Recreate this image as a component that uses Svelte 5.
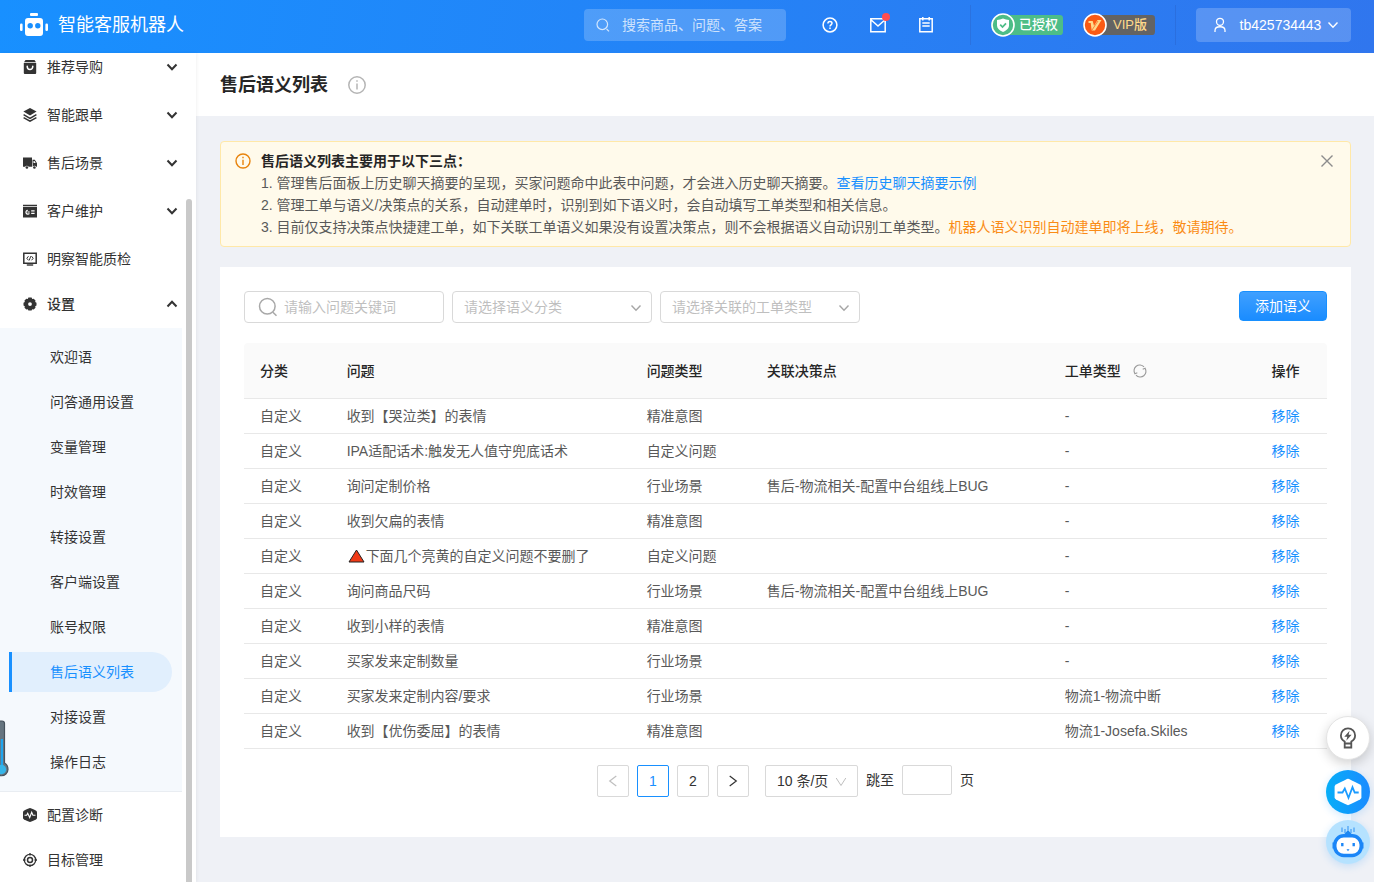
<script>
  const topMenu = [
    { label: '推荐导购', icon: 'bag', arrow: true },
    { label: '智能跟单', icon: 'layers', arrow: true },
    { label: '售后场景', icon: 'truck', arrow: true },
    { label: '客户维护', icon: 'card', arrow: true },
    { label: '明察智能质检', icon: 'monitor', arrow: false }
  ];
  const subMenu = ['欢迎语', '问答通用设置', '变量管理', '时效管理', '转接设置', '客户端设置', '账号权限', '售后语义列表', '对接设置', '操作日志'];
  const bottomMenu = [
    { label: '配置诊断', icon: 'pulse' },
    { label: '目标管理', icon: 'target' }
  ];
  const bug = '售后-物流相关-配置中台组线上BUG';
  const rows = [
    { q: '收到【哭泣类】的表情', t: '精准意图', d: '', w: '-' },
    { q: 'IPA适配话术:触发无人值守兜底话术', t: '自定义问题', d: '', w: '-' },
    { q: '询问定制价格', t: '行业场景', d: bug, w: '-' },
    { q: '收到欠扁的表情', t: '精准意图', d: '', w: '-' },
    { q: '下面几个亮黄的自定义问题不要删了', t: '自定义问题', d: '', w: '-', warn: true },
    { q: '询问商品尺码', t: '行业场景', d: bug, w: '-' },
    { q: '收到小样的表情', t: '精准意图', d: '', w: '-' },
    { q: '买家发来定制数量', t: '行业场景', d: '', w: '-' },
    { q: '买家发来定制内容/要求', t: '行业场景', d: '', w: '物流1-物流中断' },
    { q: '收到【优伤委屈】的表情', t: '精准意图', d: '', w: '物流1-Josefa.Skiles' }
  ];
  let keyword = $state('');
  let search = $state('');
  let jump = $state('');
</script>

{#snippet chevron(size)}
  <svg class="chev" width={size} height={size} viewBox="0 0 12 12" fill="none" stroke="currentColor" aria-hidden="true"><path d="M1.5 3.5 6 8.3l4.5-4.8" /></svg>
{/snippet}

{#snippet menuIcon(name)}
  <svg width="14" height="14" viewBox="0 0 14 14" fill="#333" aria-hidden="true">
    {#if name === 'bag'}
      <path d="M2.5 0h9l1.500 2.200H1zM.8 3h12.400v10a1 1 0 0 1-1 1H1.800a1 1 0 0 1-1-1z" />
      <path d="M4.200 6.200c0 4.400 5.600 4.400 5.600 0" fill="none" stroke="#fff" stroke-width="1.500" stroke-linecap="round" />
    {:else if name === 'layers'}
      <path d="M7 0l6.600 3.600L7 7.400.4 3.600z" />
      <path d="M.6 6.700 7 10.300l6.400-3.600M.6 9.700 7 13.200l6.400-3.500" fill="none" stroke="#333" stroke-width="1.500" />
    {:else if name === 'truck'}
      <path d="M0 1.500h9v9.300H5.700a2 2 0 0 0-3.600 0H0zM9.500 3.800h2.300l2.200 3.400v3.600h-.7a2 2 0 0 0-3.600 0z" />
      <path d="M10.500 4.900h1l1.200 2.200h-2.200z" fill="#fff" />
      <circle cx="3.900" cy="11.500" r="1.300" /><circle cx="11.400" cy="11.500" r="1.300" />
    {:else if name === 'card'}
      <path d="M0 .8h14v1.400H0zM0 3h14v10.400H0z" />
      <path d="M4.800 6.300A1.900 1.900 0 1 0 6.400 9.300M4.500 8h2.200M8.200 6.800h3.400M8.200 9.400h3.400" fill="none" stroke="#fff" stroke-width="1.200" />
    {:else if name === 'monitor'}
      <path d="M.8 1.300h12.400v9.900H.8z" fill="none" stroke="#333" stroke-width="1.500" />
      <path d="M3.800 12.300h6.400v1.400H3.800z" />
      <path d="M5.500 4.200 3.800 6.300 5.500 8.300M8.500 4.200l1.700 2.100-1.700 2M7.800 4.200 6.200 8.400" fill="none" stroke="#333" />
    {:else if name === 'gear'}
      <path fill-rule="evenodd" d="M5.400.5h3.200l.6 1.400 1.500-.2 1.800 1.800-.3 1.500 1.300.7v2.800l-1.300.7.3 1.600-1.800 1.700-1.500-.2-.6 1.200H5.400l-.6-1.200-1.500.2-1.800-1.700.3-1.600-1.300-.7V5.700l1.300-.7-.3-1.500 1.800-1.800 1.500.2zM7 5.200a1.900 1.900 0 1 0 0 3.800 1.900 1.900 0 0 0 0-3.800z" />
    {:else if name === 'pulse'}
      <path d="M7 0q1 0 6.200 2.700.8.500.8 1.500v5.600q0 1-.8 1.500Q8 14 7 14T.8 11.300Q0 10.800 0 9.800V4.200q0-1 .8-1.500Q6 0 7 0z" />
      <path d="M1.500 7.200h2.200l1-2 2 4.300 2-5.200 1.200 2.900h2.600" fill="none" stroke="#fff" stroke-width="1.100" />
    {:else}
      <circle cx="7" cy="7" r="5.700" fill="none" stroke="#333" stroke-width="1.300" />
      <circle cx="7" cy="7" r="2.500" fill="none" stroke="#333" stroke-width="1.500" />
      <path d="M7 0v2.500M7 11.500V14M0 7h2.500M11.500 7H14" stroke="#333" stroke-width="1.300" />
    {/if}
  </svg>
{/snippet}

<div class="app">
  <header>
    <a class="brand" href="#home">
      <svg width="28" height="24" viewBox="0 0 28 24" fill="#fff" aria-hidden="true">
        <rect x="10" y="0" width="8" height="3" rx="1" />
        <path fill-rule="evenodd" d="M8 5h12a3 3 0 0 1 3 3v12a3 3 0 0 1-3 3H8a3 3 0 0 1-3-3V8a3 3 0 0 1 3-3zM10.200 10a2.700 2.700 0 1 0 0 5.400 2.700 2.700 0 0 0 0-5.400zM17.800 10a2.700 2.700 0 1 0 0 5.400 2.700 2.700 0 0 0 0-5.400z" />
        <rect x="0" y="10.500" width="2.600" height="7.500" rx="1.200" /><rect x="25.400" y="10.500" width="2.600" height="7.500" rx="1.200" />
      </svg>
      <span>智能客服机器人</span>
    </a>
    <label class="head-search">
      <svg width="14" height="14" viewBox="0 0 14 14" fill="none" stroke="#fff" stroke-opacity=".75" stroke-width="1.200" aria-hidden="true"><circle cx="6.300" cy="6.300" r="5.300" /><path d="m10.600 11 2.400 2.400" /></svg>
      <input type="text" aria-label="搜索" placeholder="搜索商品、问题、答案" bind:value={search} />
    </label>
    <div class="tools">
      <button aria-label="帮助">
        <svg width="16" height="16" viewBox="0 0 16 16" fill="none" stroke="#fff" stroke-width="1.500"><circle cx="8" cy="8" r="6.900" /><path d="M5.900 6.600C5.900 3.700 10 3.900 10 6.300 10 7.800 8 7.900 8 9.500M8 10.600v1.500" /></svg>
      </button>
      <button aria-label="消息" class="mail">
        <svg width="16" height="16" viewBox="0 0 16 16" fill="none" stroke="#fff" stroke-width="1.500"><path d="M.8 1.800h14.400v12.900H.8zM1.200 3 8 9l6.800-6" /></svg>
        <i></i>
      </button>
      <button aria-label="日志">
        <svg width="16" height="16" viewBox="0 0 16 16" fill="none" stroke="#fff" stroke-width="1.500"><path d="M1.800 1.800h12.400v12.900H1.800zM4.800 0v3.600M11.200 0v3.600M4.300 6h7.400M4.300 9h7.400" /></svg>
      </button>
    </div>
    <div class="badges">
      <span class="badge green">
        <svg width="24" height="24" viewBox="0 0 24 24" aria-hidden="true"><circle cx="12" cy="12" r="11" fill="#4dbd87" stroke="#fff" stroke-width="1.600" /><path d="M12 5.500q3 1.200 6 1.500v5.500c0 3-2.500 5-6 6.500-3.500-1.500-6-3.500-6-6.500V7q3-.3 6-1.500z" fill="#fff" /><path d="m9.200 11.700 2.300 2.300 3.500-3.700" fill="none" stroke="#4dbd87" stroke-width="1.700" /></svg>
        <span>已授权</span>
      </span>
      <span class="badge vip">
        <svg width="24" height="24" viewBox="0 0 24 24" aria-hidden="true"><circle cx="12" cy="12" r="11" fill="#fa5a14" stroke="#fff" stroke-width="1.600" /><path d="M5.500 8h4.200l1.300 4.800L14.500 7h4L12 17.500H8.700L7.700 10H5.500z" fill="#ffd98a" /><path d="m15 8-6 9" stroke="#fa5a14" stroke-width=".7" /></svg>
        <span>VIP版</span>
      </span>
    </div>
    <button class="user">
      <svg width="16" height="16" viewBox="0 0 16 16" fill="none" stroke="#fff" stroke-width="1.300" aria-hidden="true"><circle cx="8" cy="4.800" r="3.500" /><path d="M3 15v-1.500C3 8.500 13 8.500 13 13.500V15" /></svg>
      <span>tb425734443</span>
      {@render chevron(12)}
    </button>
  </header>

  <div class="body">
    <aside>
      <nav>
        {#each topMenu as item}
          <a class="item" href="#menu">{@render menuIcon(item.icon)}<span>{item.label}</span>{#if item.arrow}{@render chevron(12)}{/if}</a>
        {/each}
        <a class="item open" href="#menu">{@render menuIcon('gear')}<span>设置</span>{@render chevron(12)}</a>
        <div class="sub">
          {#each subMenu as label}
            <a href="#menu" class:active={label === '售后语义列表'}>{label}</a>
          {/each}
        </div>
        {#each bottomMenu as item}
          <a class="item short" href="#menu">{@render menuIcon(item.icon)}<span>{item.label}</span></a>
        {/each}
      </nav>
      <div class="scroll-thumb"></div>
      <svg class="thermo" width="9" height="57" viewBox="0 0 9 57" aria-hidden="true">
        <path d="M-4 1h6q2.500 0 2.500 2.500V43q3.500 2 3.500 6.500A6.500 6.500 0 0 1-5 49z" fill="#667580" stroke="#46525c" stroke-width="1.200" />
        <path d="M.8 19H3v26H.8z" fill="#1fa5ee" /><circle cx="1.500" cy="49.500" r="4.700" fill="#36b5e8" />
      </svg>
    </aside>

    <main>
      <div class="title">
        <h1>售后语义列表</h1>
        <svg width="18" height="18" viewBox="0 0 18 18" fill="none" stroke="#b5b5b5" stroke-width="1.500" aria-hidden="true"><circle cx="9" cy="9" r="8.200" /><path d="M9 4.300v1.500M9 7.500v6" /></svg>
      </div>

      <div class="content">
        <section class="alert">
          <svg class="warn" width="16" height="16" viewBox="0 0 16 16" fill="none" stroke="#e8830c" stroke-width="1.400" aria-hidden="true"><circle cx="8" cy="8" r="7" /><path d="M8 3.800v1.500M8 6.700v5.300" /></svg>
          <div class="alert-text">
            <strong>售后语义列表主要用于以下三点：</strong>
            <p>1. 管理售后面板上历史聊天摘要的呈现，买家问题命中此表中问题，才会进入历史聊天摘要。<a href="#sample">查看历史聊天摘要示例</a></p>
            <p>2. 管理工单与语义/决策点的关系，自动建单时，识别到如下语义时，会自动填写工单类型和相关信息。</p>
            <p>3. 目前仅支持决策点快捷建工单，如下关联工单语义如果没有设置决策点，则不会根据语义自动识别工单类型。<em>机器人语义识别自动建单即将上线，敬请期待。</em></p>
          </div>
          <button class="close" aria-label="关闭">
            <svg width="14" height="14" viewBox="0 0 14 14" fill="none" stroke="#8c8c8c" stroke-width="1.400"><path d="m1.500 1.500 11 11M12.500 1.500l-11 11" /></svg>
          </button>
        </section>

        <section class="card">
          <div class="filters">
            <label class="field">
              <svg width="20" height="20" viewBox="0 0 20 20" fill="none" stroke="#a8a8a8" stroke-width="1.500" aria-hidden="true"><circle cx="9.300" cy="9.300" r="7.800" /><path d="m14.900 15.200 3.600 3.600" /></svg>
              <input type="text" aria-label="问题关键词" placeholder="请输入问题关键词" bind:value={keyword} />
            </label>
            <div class="select">
              <select aria-label="语义分类"><option>请选择语义分类</option></select>
              {@render chevron(12)}
            </div>
            <div class="select">
              <select aria-label="工单类型"><option>请选择关联的工单类型</option></select>
              {@render chevron(12)}
            </div>
            <button class="primary">添加语义</button>
          </div>

          <table>
            <colgroup><col class="c1" /><col class="c2" /><col class="c3" /><col class="c4" /><col class="c5" /><col class="c6" /></colgroup>
            <thead>
              <tr>
                <th>分类</th><th>问题</th><th>问题类型</th><th>关联决策点</th>
                <th><span class="refresh">工单类型<svg width="14" height="14" viewBox="0 0 14 14" fill="none" stroke="#999" stroke-width="1.100" aria-hidden="true"><path d="M2.100 10A5.700 5.700 0 0 1 11 2.900M11.900 4A5.700 5.700 0 0 1 3 11.100M9.700 5.300l2.400-1 .9 2.400M4.300 8.700l-2.400 1-.9-2.400" /></svg></span></th>
                <th>操作</th>
              </tr>
            </thead>
            <tbody>
              {#each rows as r}
                <tr>
                  <td>自定义</td>
                  <td>{#if r.warn}<svg class="tri" width="19" height="14" viewBox="0 0 19 14" aria-hidden="true"><path d="M9.500 1 17 13H2z" fill="#f03a17" stroke="#222" /></svg>{/if}{r.q}</td>
                  <td>{r.t}</td>
                  <td>{r.d}</td>
                  <td>{r.w}</td>
                  <td><a href="#remove">移除</a></td>
                </tr>
              {/each}
            </tbody>
          </table>

          <div class="pager">
            <button class="page" aria-label="上一页" disabled><svg width="12" height="12" viewBox="0 0 12 12" fill="none" stroke="currentColor" stroke-width="1.200"><path d="M9.300 1 2.700 6l6.600 5" /></svg></button>
            <button class="page current">1</button>
            <button class="page">2</button>
            <button class="page" aria-label="下一页"><svg width="12" height="12" viewBox="0 0 12 12" fill="none" stroke="currentColor" stroke-width="1.200"><path d="M2.700 1 9.300 6l-6.600 5" /></svg></button>
            <div class="select size">
              <select aria-label="每页条数"><option>10 条/页</option></select>
              <svg class="chev" width="12" height="12" viewBox="0 0 12 12" fill="none" stroke="currentColor" aria-hidden="true"><path d="m1.200 2 4.800 7.500L10.800 2" /></svg>
            </div>
            <label class="jump"><span>跳至</span><input type="text" aria-label="页码" bind:value={jump} /><span>页</span></label>
          </div>
        </section>
      </div>
    </main>
  </div>

  <div class="floats">
    <button class="bulb" aria-label="建议">
      <svg width="20" height="24" viewBox="0 0 20 24" fill="none" stroke="#555" stroke-width="1.800"><path d="M6.700 17.500v-2C4 14 2.900 11.800 2.900 9.500a7.100 7.100 0 0 1 14.200 0c0 2.300-1.100 4.500-3.800 6v2zM6.700 17.500v4h6.600v-4" /><path d="M11.600 4.800 6.300 10.700h3l-1 4 5.300-6h-3z" fill="#555" stroke="none" /></svg>
    </button>
    <button class="diag" aria-label="诊断">
      <svg width="28" height="28" viewBox="0 0 28 28"><path d="M14 .8q.8 0 12 5.700 1.400.8 1.400 2.200v10.600q0 1.400-1.400 2.200-11.200 5.700-12 5.700t-12-5.700Q.6 20.700.6 19.300V8.700q0-1.400 1.400-2.200Q13.200.8 14 .8z" fill="#fff" /><path d="M3.500 14.500h5l2.300-4 3.700 9.300 4-10.600 2.200 5.300h4" fill="none" stroke="#1a9bff" stroke-width="1.800" /></svg>
    </button>
    <button class="bot" aria-label="机器人助手">
      <svg width="32" height="32" viewBox="0 0 32 32" fill="none"><path d="M10 1.500v4.500M13 3v4M16 0v8M19 3v4M22 1.500v4.500" stroke="#3a98f5" stroke-width="1.100" /><path d="M11 9.500 15.200 5h1.600L21 9.500z" fill="#1e88f0" /><rect x="2.800" y="9.800" width="26.400" height="19.700" rx="9" fill="#fff" stroke="#1b86f7" stroke-width="3.400" /><path d="M.5 16.500h2v6h-2zM29.500 16.500h2v6h-2z" fill="#1b86f7" /><path d="M10.300 17v3.300M21.700 17v3.300" stroke="#1b86f7" stroke-width="2.400" /><path d="M14.500 23.200h3l-1.500 2z" fill="#1b86f7" /></svg>
    </button>
  </div>
</div>

<style>
  :global(body) { margin: 0; background: #eff1f6; }
  .app, .app * { box-sizing: border-box; }
  .app {
    min-height: 100vh;
    font: 14px/22px "Liberation Sans", "Noto Sans CJK SC", sans-serif;
    color: #595959;
  }
  button, input, select { font: inherit; color: inherit; }
  button { border: 0; padding: 0; background: none; cursor: pointer; display: flex; align-items: center; justify-content: center; }
  input { border: 0; outline: 0; padding: 0; background: none; min-width: 0; }
  a { color: #1890ff; text-decoration: none; }
  svg { flex: none; display: block; }
  .chev { stroke-width: 1.4; }

  header {
    height: 53px;
    padding: 0 23px 3px 20px;
    display: flex;
    align-items: center;
    background: linear-gradient(100deg, #1890ff, #3076ee);
    color: #fff;
  }
  .brand { display: flex; align-items: center; gap: 10px; color: #fff; font-size: 18px; margin-right: auto; }
  .head-search { width: 202px; height: 32px; padding: 0 12px; display: flex; align-items: center; gap: 12px; border-radius: 4px; background: #ffffff33; }
  .head-search input { flex: 1; }
  .head-search input::placeholder { color: #ffffffbb; opacity: 1; }
  .tools { display: flex; gap: 32px; padding: 0 36px; height: 40px; border-right: 1px solid #2a72e0; }
  .mail { position: relative; }
  .mail i { position: absolute; top: 8px; right: -4px; width: 8px; height: 8px; border-radius: 50%; background: #ff4d4f; }
  .badges { display: flex; align-items: center; gap: 20px; height: 40px; padding: 0 20px; border-right: 1px solid #2a6fdf; }
  .badge { height: 20px; width: 72px; display: flex; align-items: center; gap: 4px; border-radius: 12px 4px 4px 12px; font-size: 13px; font-weight: 500; white-space: nowrap; }
  .green { background: #4dbd87; }
  .vip { background: #636363; color: #ffd98a; gap: 6px; }
  .user { margin-left: 20px; height: 34px; width: 155px; gap: 12px; border-radius: 4px; background: #ffffff33; padding-left: 4px; }
  .user .chev { margin-left: -6px; }

  .body { display: flex; height: calc(100vh - 53px); }
  aside { width: 196px; flex: none; position: relative; overflow: hidden; background: #fff; color: #333; box-shadow: 1px 0 3px #0000000d; }
  nav { margin: -10px 14px 0 0; }
  .item { height: 48px; padding: 0 4px 0 23px; display: flex; align-items: center; gap: 10px; color: #333; }
  .item .chev { margin-left: auto; stroke-width: 2; }
  .short { height: 45px; }
  .open { height: 45px; padding-bottom: 3px; font-weight: 500; }
  .open .chev { transform: rotate(180deg); }
  .sub { padding: 9px 10px 9px 9px; display: flex; flex-direction: column; gap: 5px; background: #f5f9fd; border-bottom: 1px solid #e9edf2; }
  .sub a { height: 40px; padding-left: 38px; line-height: 40px; color: #333; border-left: 3px solid transparent; border-radius: 0 20px 20px 0; }
  .sub a.active { color: #1890ff; background: #e1effd; border-left-color: #1890ff; }
  .scroll-thumb { position: absolute; right: 4px; top: 146px; bottom: -4px; width: 6px; border-radius: 3px; background: #c9c9c9; }
  .thermo { position: absolute; left: 0; bottom: 105px; }

  main { flex: 1; min-width: 0; overflow: hidden; }
  .title { height: 63px; padding: 0 24px; display: flex; align-items: center; gap: 20px; background: #fff; }
  h1 { margin: 0; font-size: 18px; line-height: 28px; font-weight: 700; color: #262626; }
  .content { padding: 25px 23px 24px 24px; display: flex; flex-direction: column; gap: 20px; }
  .alert { display: flex; align-items: flex-start; gap: 10px; padding: 8px 16px 8px 14px; background: #fffaeb; border: 1px solid #ffe8a8; border-radius: 4px; }
  .warn { margin-top: 3px; }
  .alert-text { flex: 1; }
  .alert strong { display: block; font-weight: 700; color: #262626; }
  .alert p { margin: 0; }
  .alert em { font-style: normal; color: #fa8c16; }
  .close { height: 22px; }

  .card { background: #fff; padding: 24px 24px 40px; }
  .filters { display: flex; align-items: flex-start; gap: 8px; margin-bottom: 20px; }
  .field, .select { width: 200px; height: 32px; border: 1px solid #d9d9d9; border-radius: 4px; color: #bfbfbf; }
  .field { display: flex; align-items: center; gap: 6px; padding: 0 12px 0 13px; }
  .field input { flex: 1; color: #595959; }
  .field input::placeholder { color: #bfbfbf; opacity: 1; }
  .select { position: relative; }
  .select select { width: 100%; height: 100%; padding: 0 28px 0 11px; border: 0; outline: 0; background: none; appearance: none; }
  .select .chev { position: absolute; right: 9px; top: 10px; color: #a6a6a6; pointer-events: none; }
  .primary { margin-left: auto; width: 88px; height: 30px; color: #fff; border: 1px solid #1890ff; border-radius: 4px; background: linear-gradient(#40a0ff, #1a8cff); }

  table { width: 100%; border-collapse: separate; border-spacing: 0; table-layout: fixed; }
  .c1 { width: 8%; } .c2 { width: 27.7%; } .c3 { width: 11.1%; } .c4 { width: 27.5%; } .c5 { width: 19.1%; } .c6 { width: 6.6%; }
  th, td { padding: 0 0 0 16px; text-align: left; border-bottom: 1px solid #e8e8e8; white-space: nowrap; }
  th { height: 56px; background: #fafafa; color: #262626; font-weight: 500; }
  th:first-child { border-top-left-radius: 4px; }
  th:last-child { border-top-right-radius: 4px; }
  td { height: 35px; }
  .refresh { display: inline-flex; align-items: center; gap: 12px; }
  .tri { display: inline-block; vertical-align: -2px; }

  .pager { display: flex; justify-content: center; align-items: flex-start; gap: 8px; margin-top: 16px; color: #333; }
  .page { width: 32px; height: 32px; border: 1px solid #d9d9d9; border-radius: 2px; }
  .page:disabled { color: #bfbfbf; }
  .current { color: #1890ff; border-color: #1890ff; }
  .size { width: 93px; margin-left: 8px; color: #333; border-radius: 2px; }
  .size .chev { color: #bfbfbf; stroke-width: 1; right: 10px; }
  .size select { padding-right: 16px; }
  .jump { display: flex; align-items: center; gap: 8px; }
  .jump input { width: 50px; height: 30px; border: 1px solid #d9d9d9; border-radius: 2px; }

  .floats { position: fixed; right: 4px; bottom: 18px; display: flex; flex-direction: column; gap: 6px; }
  .floats button { width: 44px; height: 44px; border-radius: 50%; }
  .floats .bulb { margin-bottom: 4px; background: #fff; border: 1px solid #e3e3e3; box-shadow: 0 4px 12px #0000002e; }
  .floats .diag { background: linear-gradient(90deg, #06aef8, #1b8bff); box-shadow: 0 2px 8px #1890ff33; }
  .floats .bot { background: #b5e2ff; box-shadow: 0 2px 8px #1890ff33; }
</style>
